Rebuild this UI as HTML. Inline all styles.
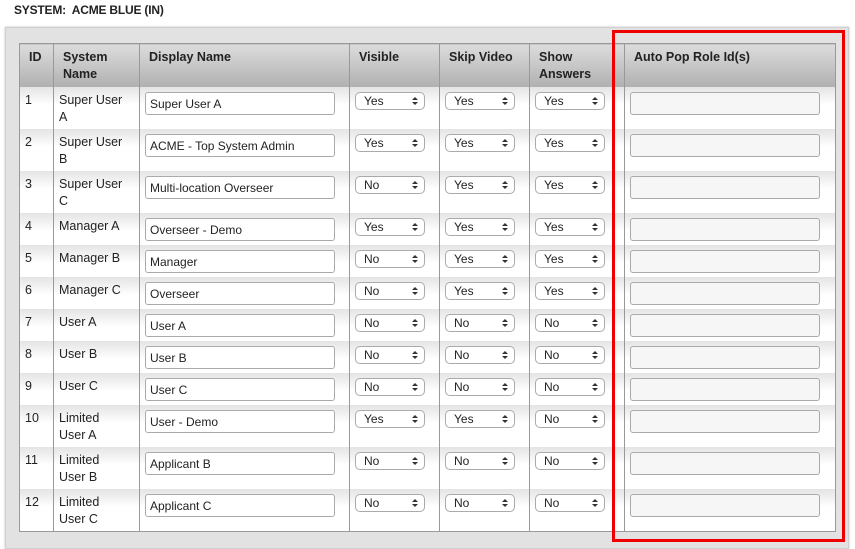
<!DOCTYPE html>
<html><head><style>
body{margin:0;width:855px;height:543px;background:#fff;font-family:"Liberation Sans",sans-serif;position:relative;overflow:hidden}
.title{position:absolute;left:14px;top:3px;font-size:12px;font-weight:bold;color:#222;letter-spacing:-0.2px}
.panel{position:absolute;left:5px;top:27px;width:842px;height:520px;background:#e2e2e2;border:1px solid #d0d0d0;box-shadow:0 0 2px #bbb}
table{position:absolute;left:19px;top:43px;border-collapse:collapse;table-layout:fixed;border:1px solid #999;font-size:12.5px;color:#222}
th{height:42px;box-sizing:border-box;background:linear-gradient(#dcdcdc,#b0b0b0);text-align:left;vertical-align:top;padding:5px 0 0 9px;font-size:12.5px;line-height:17px;border-left:1px solid #999;color:#222}
td{vertical-align:top;padding:5px 0 0 5px;line-height:17px;border-left:1px solid #999;background:linear-gradient(#e4e4e4,#fff 18px);box-sizing:border-box}
.in{width:190px;height:23px;border:1px solid #aaa;border-radius:3px;background:#fff;box-sizing:border-box;font-size:12px;padding:4px 0 0 4px;line-height:14px}
.in2{width:190px;height:23px;border:1px solid #aaa;border-radius:3px;background:#f6f6f6;box-sizing:border-box}
.sel{width:70px;height:18px;border:1px solid #aaa;border-radius:5px;background:#fff;box-sizing:border-box;font-size:12px;line-height:14px;padding:1px 0 0 8px;position:relative}
.sel:after{content:"";position:absolute;right:6px;top:4px;width:0;height:0;border-left:3px solid transparent;border-right:3px solid transparent;border-bottom:3px solid #333}
.sel:before{content:"";position:absolute;right:6px;top:9px;width:0;height:0;border-left:3px solid transparent;border-right:3px solid transparent;border-top:3px solid #333}
.red{position:absolute;left:612px;top:30px;width:227px;height:506px;border:3px solid #e00}
td.s{padding-left:5px}
</style></head><body>
<div class="title">SYSTEM:&nbsp; ACME BLUE (IN)</div>
<div class="panel"></div>
<table>
<colgroup><col style="width:34px"><col style="width:86px"><col style="width:210px"><col style="width:90px"><col style="width:90px"><col style="width:95px"><col style="width:211px"></colgroup>
<tr style="height:43px"><th>ID</th><th>System<br>Name</th><th>Display Name</th><th>Visible</th><th>Skip Video</th><th>Show<br>Answers</th><th>Auto Pop Role Id(s)</th></tr>
<tr style="height:42px"><td>1</td><td>Super User<br>A</td><td><div class="in">Super User A</div></td><td class="s"><div class="sel">Yes</div></td><td class="s"><div class="sel">Yes</div></td><td class="s"><div class="sel">Yes</div></td><td><div class="in2"></div></td></tr>
<tr style="height:42px"><td>2</td><td>Super User<br>B</td><td><div class="in">ACME - Top System Admin</div></td><td class="s"><div class="sel">Yes</div></td><td class="s"><div class="sel">Yes</div></td><td class="s"><div class="sel">Yes</div></td><td><div class="in2"></div></td></tr>
<tr style="height:42px"><td>3</td><td>Super User<br>C</td><td><div class="in">Multi-location Overseer</div></td><td class="s"><div class="sel">No</div></td><td class="s"><div class="sel">Yes</div></td><td class="s"><div class="sel">Yes</div></td><td><div class="in2"></div></td></tr>
<tr style="height:32px"><td>4</td><td>Manager A</td><td><div class="in">Overseer - Demo</div></td><td class="s"><div class="sel">Yes</div></td><td class="s"><div class="sel">Yes</div></td><td class="s"><div class="sel">Yes</div></td><td><div class="in2"></div></td></tr>
<tr style="height:32px"><td>5</td><td>Manager B</td><td><div class="in">Manager</div></td><td class="s"><div class="sel">No</div></td><td class="s"><div class="sel">Yes</div></td><td class="s"><div class="sel">Yes</div></td><td><div class="in2"></div></td></tr>
<tr style="height:32px"><td>6</td><td>Manager C</td><td><div class="in">Overseer</div></td><td class="s"><div class="sel">No</div></td><td class="s"><div class="sel">Yes</div></td><td class="s"><div class="sel">Yes</div></td><td><div class="in2"></div></td></tr>
<tr style="height:32px"><td>7</td><td>User A</td><td><div class="in">User A</div></td><td class="s"><div class="sel">No</div></td><td class="s"><div class="sel">No</div></td><td class="s"><div class="sel">No</div></td><td><div class="in2"></div></td></tr>
<tr style="height:32px"><td>8</td><td>User B</td><td><div class="in">User B</div></td><td class="s"><div class="sel">No</div></td><td class="s"><div class="sel">No</div></td><td class="s"><div class="sel">No</div></td><td><div class="in2"></div></td></tr>
<tr style="height:32px"><td>9</td><td>User C</td><td><div class="in">User C</div></td><td class="s"><div class="sel">No</div></td><td class="s"><div class="sel">No</div></td><td class="s"><div class="sel">No</div></td><td><div class="in2"></div></td></tr>
<tr style="height:42px"><td>10</td><td>Limited<br>User A</td><td><div class="in">User - Demo</div></td><td class="s"><div class="sel">Yes</div></td><td class="s"><div class="sel">Yes</div></td><td class="s"><div class="sel">No</div></td><td><div class="in2"></div></td></tr>
<tr style="height:42px"><td>11</td><td>Limited<br>User B</td><td><div class="in">Applicant B</div></td><td class="s"><div class="sel">No</div></td><td class="s"><div class="sel">No</div></td><td class="s"><div class="sel">No</div></td><td><div class="in2"></div></td></tr>
<tr style="height:43px"><td>12</td><td>Limited<br>User C</td><td><div class="in">Applicant C</div></td><td class="s"><div class="sel">No</div></td><td class="s"><div class="sel">No</div></td><td class="s"><div class="sel">No</div></td><td><div class="in2"></div></td></tr>
</table>
<div class="red"></div>
</body></html>
